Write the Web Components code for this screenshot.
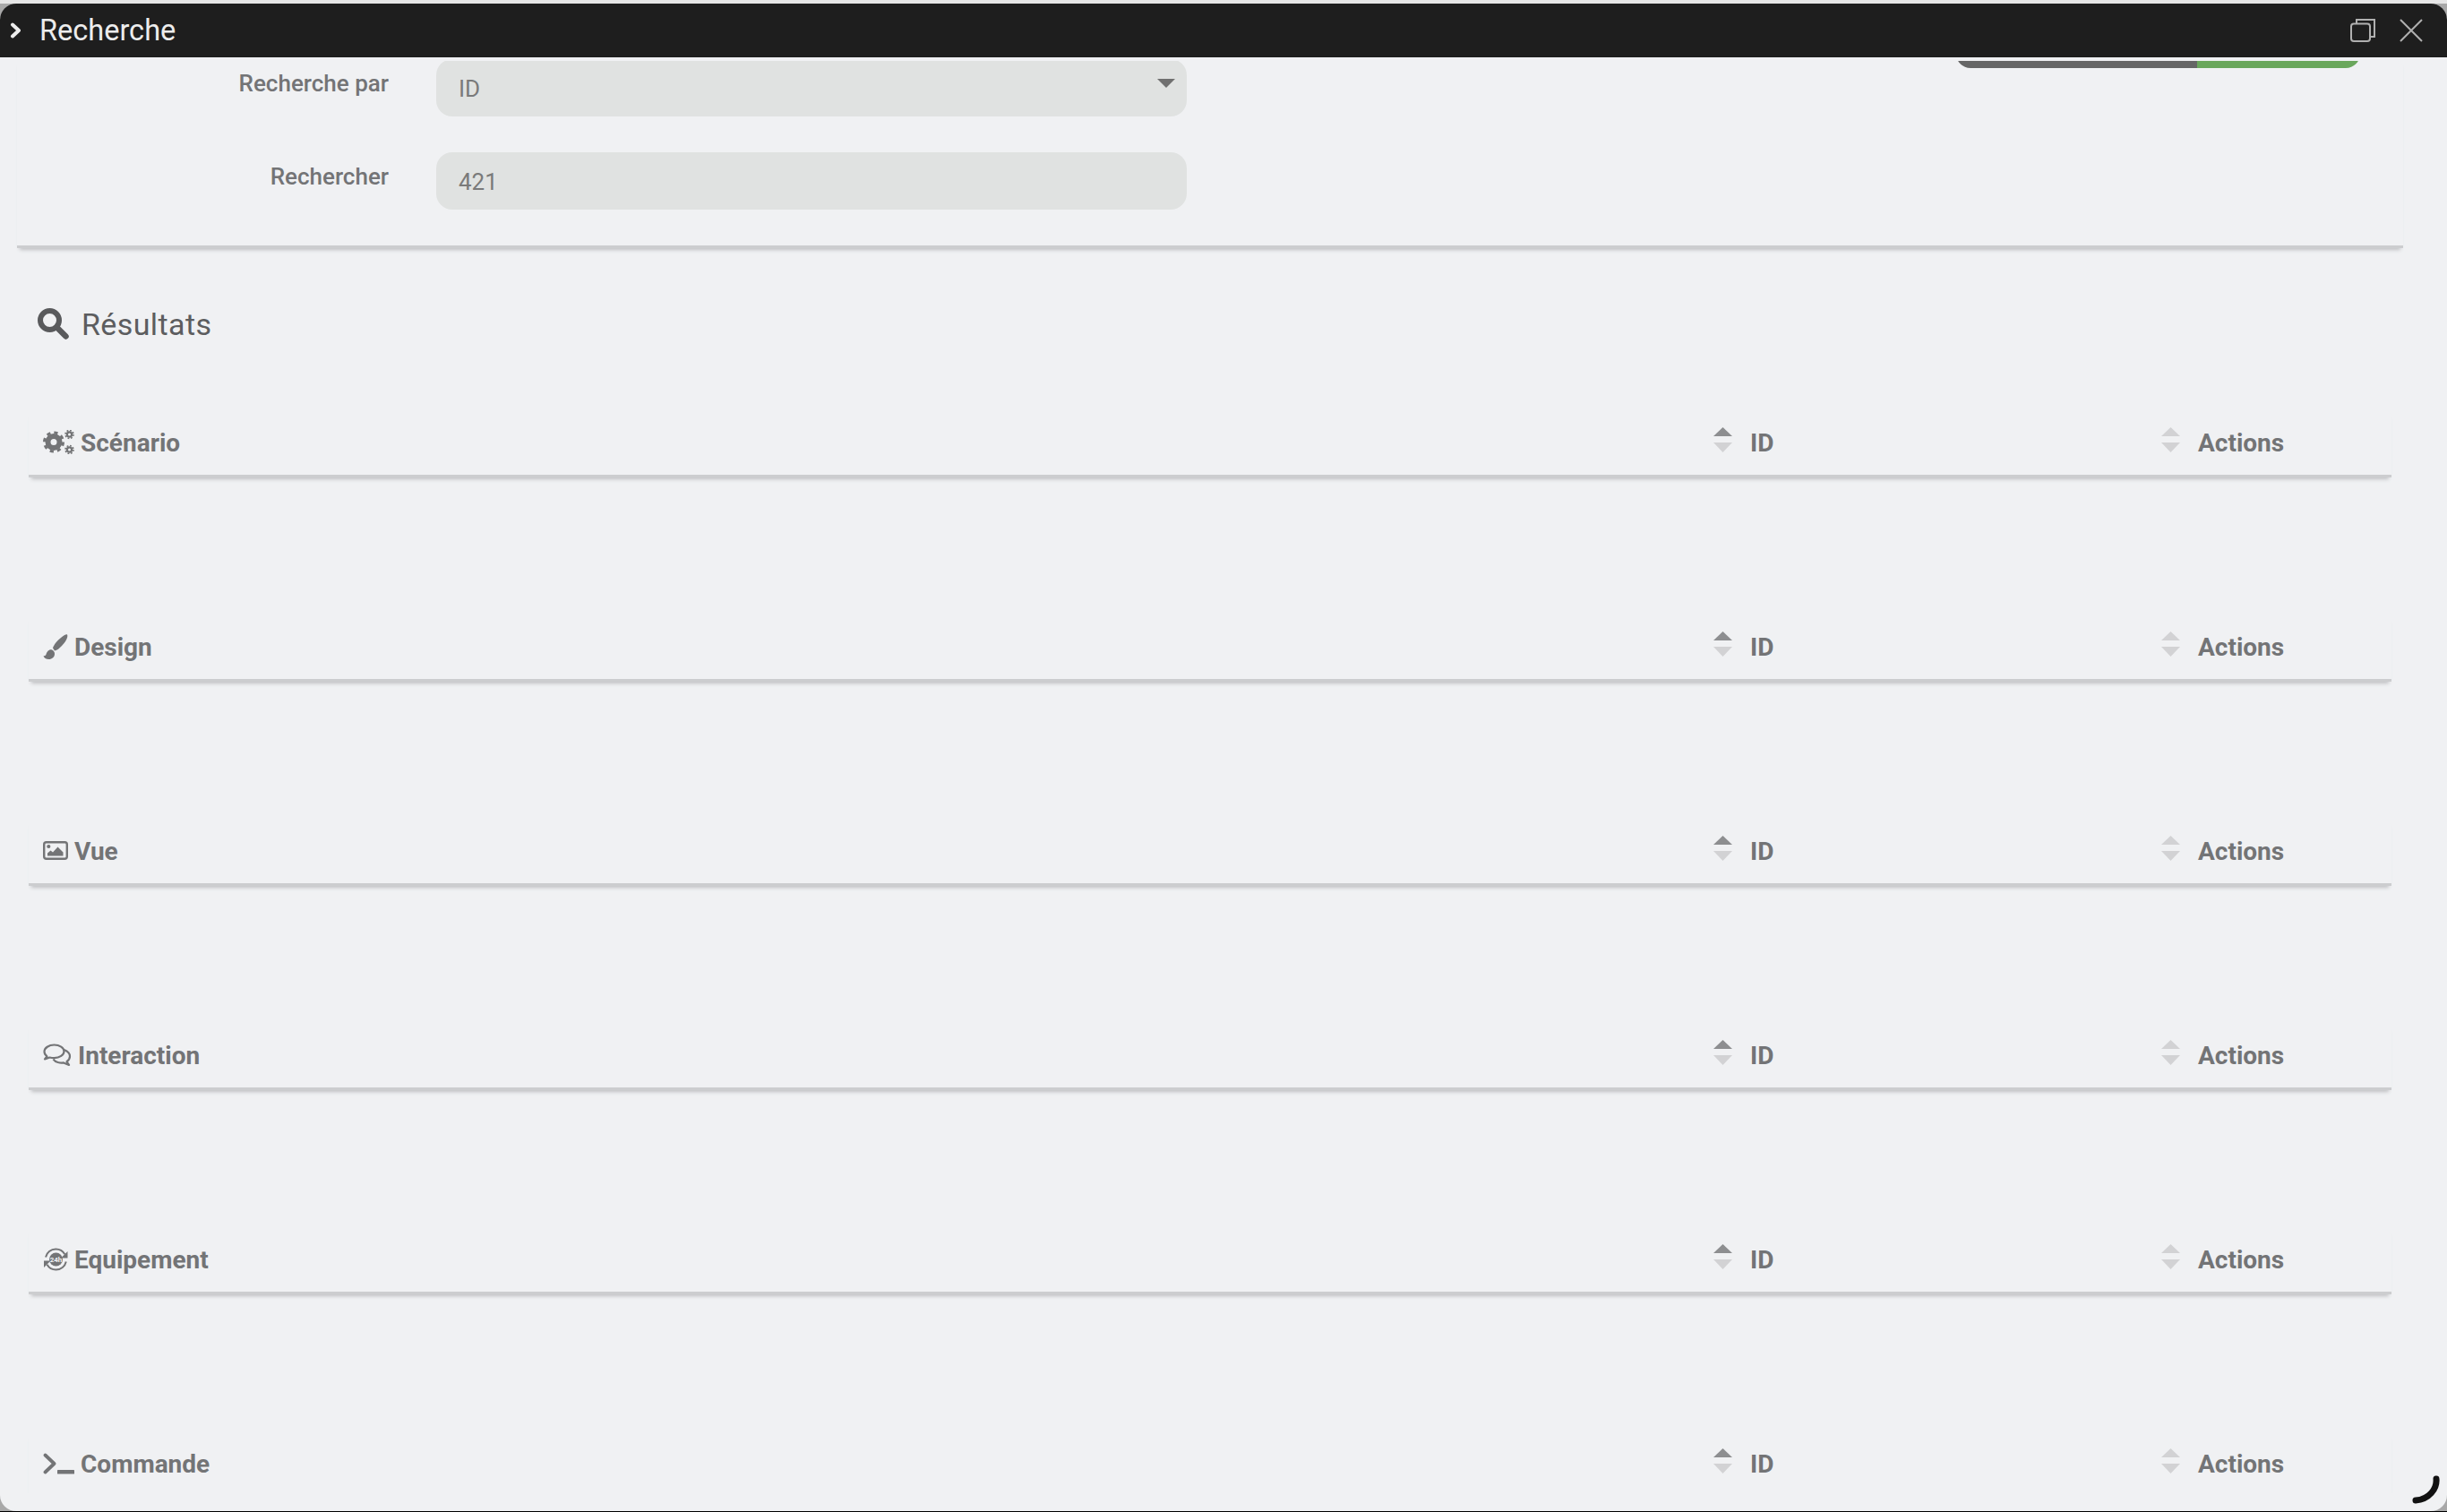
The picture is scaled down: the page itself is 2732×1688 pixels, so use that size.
<!DOCTYPE html>
<html lang="fr">
<head>
<meta charset="utf-8">
<title>Recherche</title>
<style>
  html, body { margin: 0; height: 100%; background: #000; overflow: hidden; }
  body { font-family: Roboto, "Liberation Sans", sans-serif; }
</style>
</head>
<body>
<search-window heading="Recherche">
  <search-form></search-form>
  <result-panel>
    <result-table label="Scénario" icon="cogs"></result-table>
    <result-table label="Design" icon="brush"></result-table>
    <result-table label="Vue" icon="image"></result-table>
    <result-table label="Interaction" icon="chat"></result-table>
    <result-table label="Equipement" icon="clock"></result-table>
    <result-table label="Commande" icon="terminal"></result-table>
  </result-panel>
</search-window>

<script>
// icons are drawn 1:1 in pixels, each with its own width and height
const ICONS = {
  cogs: { w: 35, h: 27, svg: `<g fill="none" stroke="#737476">
    <circle cx="12" cy="13.500" r="6.500" stroke-width="6"/>
    <circle cx="12" cy="13.500" r="10.500" stroke-width="3" stroke-dasharray="4.200 4.050"/>
    <circle cx="29.500" cy="5" r="2.600" stroke-width="2.200"/>
    <circle cx="29.500" cy="5" r="4.500" stroke-width="1.600" stroke-dasharray="1.800 1.730"/>
    <circle cx="29.500" cy="22" r="2.600" stroke-width="2.200"/>
    <circle cx="29.500" cy="22" r="4.500" stroke-width="1.600" stroke-dasharray="1.800 1.730"/></g>` },
  brush: { w: 28, h: 29, svg: `<g fill="#737476">
    <path d="M27 1.500C28 3 27 8 21 14c-3 3-5 5-8 5.500l-2-3c1-3.500 5-8.500 9-11.500 3-2.500 6-4.200 7-3.500z"/>
    <path d="M10 18.500c2 1 3 2.500 3 4.500 0 3.500-3 6-6.500 6-3 0-5.500-1.500-6-4 1.500.5 2.500 0 3-1.500.8-3 3.500-6 6.500-5z"/></g>` },
  image: { w: 28, h: 21, svg: `<rect x="1.200" y="1.200" width="25.600" height="18.600" rx="2.500" fill="none" stroke="#737476" stroke-width="2.400"/>
    <circle cx="6.300" cy="6" r="2.100" fill="#737476"/>
    <path fill="#737476" d="M5 16.500v-3l3.500-3 2.500 2 5.500-6 6 6v4z"/>` },
  chat: { w: 32, h: 25, svg: `<g fill="none" stroke="#737476" stroke-width="2.200" stroke-linejoin="round">
    <path d="M12.500 1.500C6.500 1.500 1.500 5 1.500 9c0 2.200 1.200 4 3 5.300L2 17.500l5.500-2c1.500.4 3.300.6 5 .6 6 0 11-3.300 11-7.300s-5-7.300-11-7.300z"/>
    <path d="M23.500 7c4 1.500 6.500 4 6.500 7.300 0 2.500-1.500 4.600-3.500 5.900l2.500 3.700-6-2.500c-4 .8-9-.5-11.500-3.900"/></g>` },
  clock: { w: 28, h: 26, svg: `<circle cx="14.500" cy="13" r="7.500" fill="#737476"/>
    <g fill="none" stroke="#737476" stroke-width="2"><path d="M3 10.500C4.200 5.300 8.800 1.500 14.300 1.500c4.300 0 8 2.300 10 5.700"/><path d="M25.800 15.500c-1.200 5.200-5.800 9-11.300 9-4.300 0-8-2.300-10-5.700"/></g>
    <path fill="#737476" d="M27.500 4v7.500H20zM1 22v-7.500h7.500z"/>
    <text x="14.500" y="15.800" font-size="8" font-weight="700" text-anchor="middle" fill="#f0f1f3" font-family="Roboto">24h</text>` },
  terminal: { w: 35, h: 24, svg: `<path d="M2.500 2.500l10 9.500-10 9.500" fill="none" stroke="#737476" stroke-width="3.800" stroke-linecap="round" stroke-linejoin="round"/>
    <rect x="16" y="19" width="19" height="4.500" rx=".6" fill="#737476"/>` }
};

class SearchWindow extends HTMLElement {
  constructor() {
    super();
    this.attachShadow({ mode: 'open' });
  }
  connectedCallback() {
    const heading = this.getAttribute('heading') || '';
    this.shadowRoot.innerHTML = `
      <style>
        :host {
          display: flex;
          flex-direction: column;
          position: relative;
          height: 1687px;
          background: linear-gradient(#e6e6e6 4px, #a8a8a8 4px);
          overflow: hidden;
        }
        .frame {
          flex: 1;
          min-height: 0;
          margin-top: 4px;
          display: flex;
          flex-direction: column;
          background: #f0f1f3;
          border-radius: 18px;
          overflow: hidden;
        }
        .bar {
          flex: none;
          height: 60px;
          display: flex;
          align-items: center;
          background: #1e1e1e;
          color: #ececec;
          font-size: 32.500px;
          padding: 0 27px 0 11px;
        }
        .bar svg { display: block; flex: none; }
        .bar .chev { width: 13px; height: 18px; margin-right: 20px; }
        .bar .title { flex: 1; }
        .bar .restore { width: 28px; height: 26px; margin-right: 27px; }
        .bar .close { width: 26px; height: 26px; }
        .scroll {
          flex: 1;
          min-height: 0;
          margin: 4px 0 20px;
          overflow: hidden;
        }
        .grip {
          position: absolute;
          right: 8px;
          bottom: 8px;
          width: 32px;
          height: 32px;
        }
      </style>
      <div class="frame">
        <div class="bar">
          <svg class="chev" viewBox="0 0 13 18"><path d="M3 2.500l7 6.500-7 6.500" fill="none" stroke="#ececec" stroke-width="4" stroke-linecap="round" stroke-linejoin="round"/></svg>
          <span class="title">${heading}</span>
          <svg class="restore" viewBox="0 0 28 26"><g fill="none" stroke="#b0b0b0" stroke-width="2"><rect x="1" y="5.500" width="21" height="19.500" rx="3"/><path d="M7 5V1h20v19h-5"/></g></svg>
          <svg class="close" viewBox="0 0 26 26"><path d="M1 1l24 24M25 1L1 25" fill="none" stroke="#b0b0b0" stroke-width="2"/></svg>
        </div>
        <div class="scroll"><slot></slot></div>
      </div>
      <svg class="grip" viewBox="0 0 32 32"><path d="M28 4c1 11-8 23-23 24" fill="none" stroke="#111" stroke-width="7" stroke-linecap="round"/></svg>
    `;
  }
}

class SearchForm extends HTMLElement {
  constructor() {
    super();
    this.attachShadow({ mode: 'open' });
  }
  connectedCallback() {
    this.shadowRoot.innerHTML = `
      <style>
        :host {
          display: flex;
          justify-content: space-between;
          align-items: flex-start;
          margin: -2px 49px 0 19px;
          padding-bottom: 40px;
          border-bottom: 3px solid #cccdcf;
          box-shadow: 0 5px 4px -3px #bfc0c3;
          color: #737476;
          font-size: 26px;
        }
        .rows { display: flex; flex-direction: column; gap: 40px; }
        .row { display: flex; gap: 53px; }
        label {
          width: 415px;
          text-align: right;
          font-weight: 500;
          height: 64px;
          padding-top: 5px;
          box-sizing: border-box;
          line-height: 44px;
        }
        .field {
          position: relative;
          width: 838px;
          height: 64px;
          box-sizing: border-box;
          padding: 3px 25px 0;
          line-height: 60px;
          background: #e0e2e1;
          border-radius: 18px;
          font-size: 26px;
          color: #7a7a7a;
        }
        .caret {
          position: absolute;
          right: 13px;
          top: 22px;
          border-style: solid;
          border-width: 10px 10px 0;
          border-color: #707070 transparent transparent;
        }
        .actions {
          display: flex;
          margin: -40px 48px 0 0;
          height: 50px;
          border-radius: 0 0 16px 16px;
          overflow: hidden;
        }
        .actions span { display: block; }
        .grey { width: 269px; background: #666; }
        .green { width: 182px; background: #6aa75c; }
      </style>
      <div class="rows">
        <div class="row"><label>Recherche par</label><div class="field">ID<i class="caret"></i></div></div>
        <div class="row"><label>Rechercher</label><div class="field">421</div></div>
      </div>
      <div class="actions"><span class="grey"></span><span class="green"></span></div>
    `;
  }
}

class ResultPanel extends HTMLElement {
  constructor() {
    super();
    this.attachShadow({ mode: 'open' });
  }
  connectedCallback() {
    this.shadowRoot.innerHTML = `
      <style>
        :host { display: block; padding: 0 62px 0 32px; }
        h3 {
          display: flex;
          align-items: flex-start;
          gap: 14px;
          margin: 0;
          padding-left: 9px;
          height: 182px;
          font-weight: 400;
          font-size: 34px;
          color: #5c5d5f;
          letter-spacing: .4px;
        }
        h3 svg { width: 36px; height: 36px; margin-top: 66px; }
        h3 span { margin-top: 65px; }
        .tables { display: flex; flex-direction: column; gap: 154px; }
      </style>
      <h3><svg viewBox="0 0 36 36"><g fill="none" stroke="#595a5c" stroke-linecap="round"><circle cx="14.500" cy="14.500" r="10.500" stroke-width="6"/><path d="M23 23l9.500 9.500" stroke-width="6.500"/></g></svg><span>Résultats</span></h3>
      <div class="tables"><slot></slot></div>
    `;
  }
}

class ResultTable extends HTMLElement {
  constructor() {
    super();
    this.attachShadow({ mode: 'open' });
  }
  connectedCallback() {
    const label = this.getAttribute('label') || '';
    const icon = ICONS[this.getAttribute('icon')];
    const sort = (upColor) => `
      <svg class="sort" viewBox="0 0 21 28"><path fill="${upColor}" d="M10.500 0L21 10H0z"/><path fill="#d2d2d4" d="M0 17h21L10.500 28z"/></svg>`;
    this.shadowRoot.innerHTML = `
      <style>
        :host {
          display: grid;
          grid-template-columns: 1881px 500px 257px;
          height: 74px;
          box-sizing: border-box;
          border-bottom: 3px solid #cccdcf;
          box-shadow: 0 5px 4px -3px #bfc0c3;
          color: #737476;
          font-weight: 700;
          font-size: 28px;
        }
        .cell { display: flex; align-items: center; min-width: 0; }
        .cell.first { padding-left: 16px; gap: 7px; }
        .first svg { flex: none; margin-top: -2px; }
        .sort { width: 21px; height: 28px; margin-right: 20px; margin-top: -8px; flex: none; }
      </style>
      <div class="cell first"><svg width="${icon.w}" height="${icon.h}" viewBox="0 0 ${icon.w} ${icon.h}">${icon.svg}</svg><span>${label}</span></div>
      <div class="cell">${sort('#8d8e90')}<span>ID</span></div>
      <div class="cell">${sort('#d2d2d4')}<span>Actions</span></div>
    `;
  }
}

customElements.define('search-window', SearchWindow);
customElements.define('search-form', SearchForm);
customElements.define('result-panel', ResultPanel);
customElements.define('result-table', ResultTable);
</script>
</body>
</html>
